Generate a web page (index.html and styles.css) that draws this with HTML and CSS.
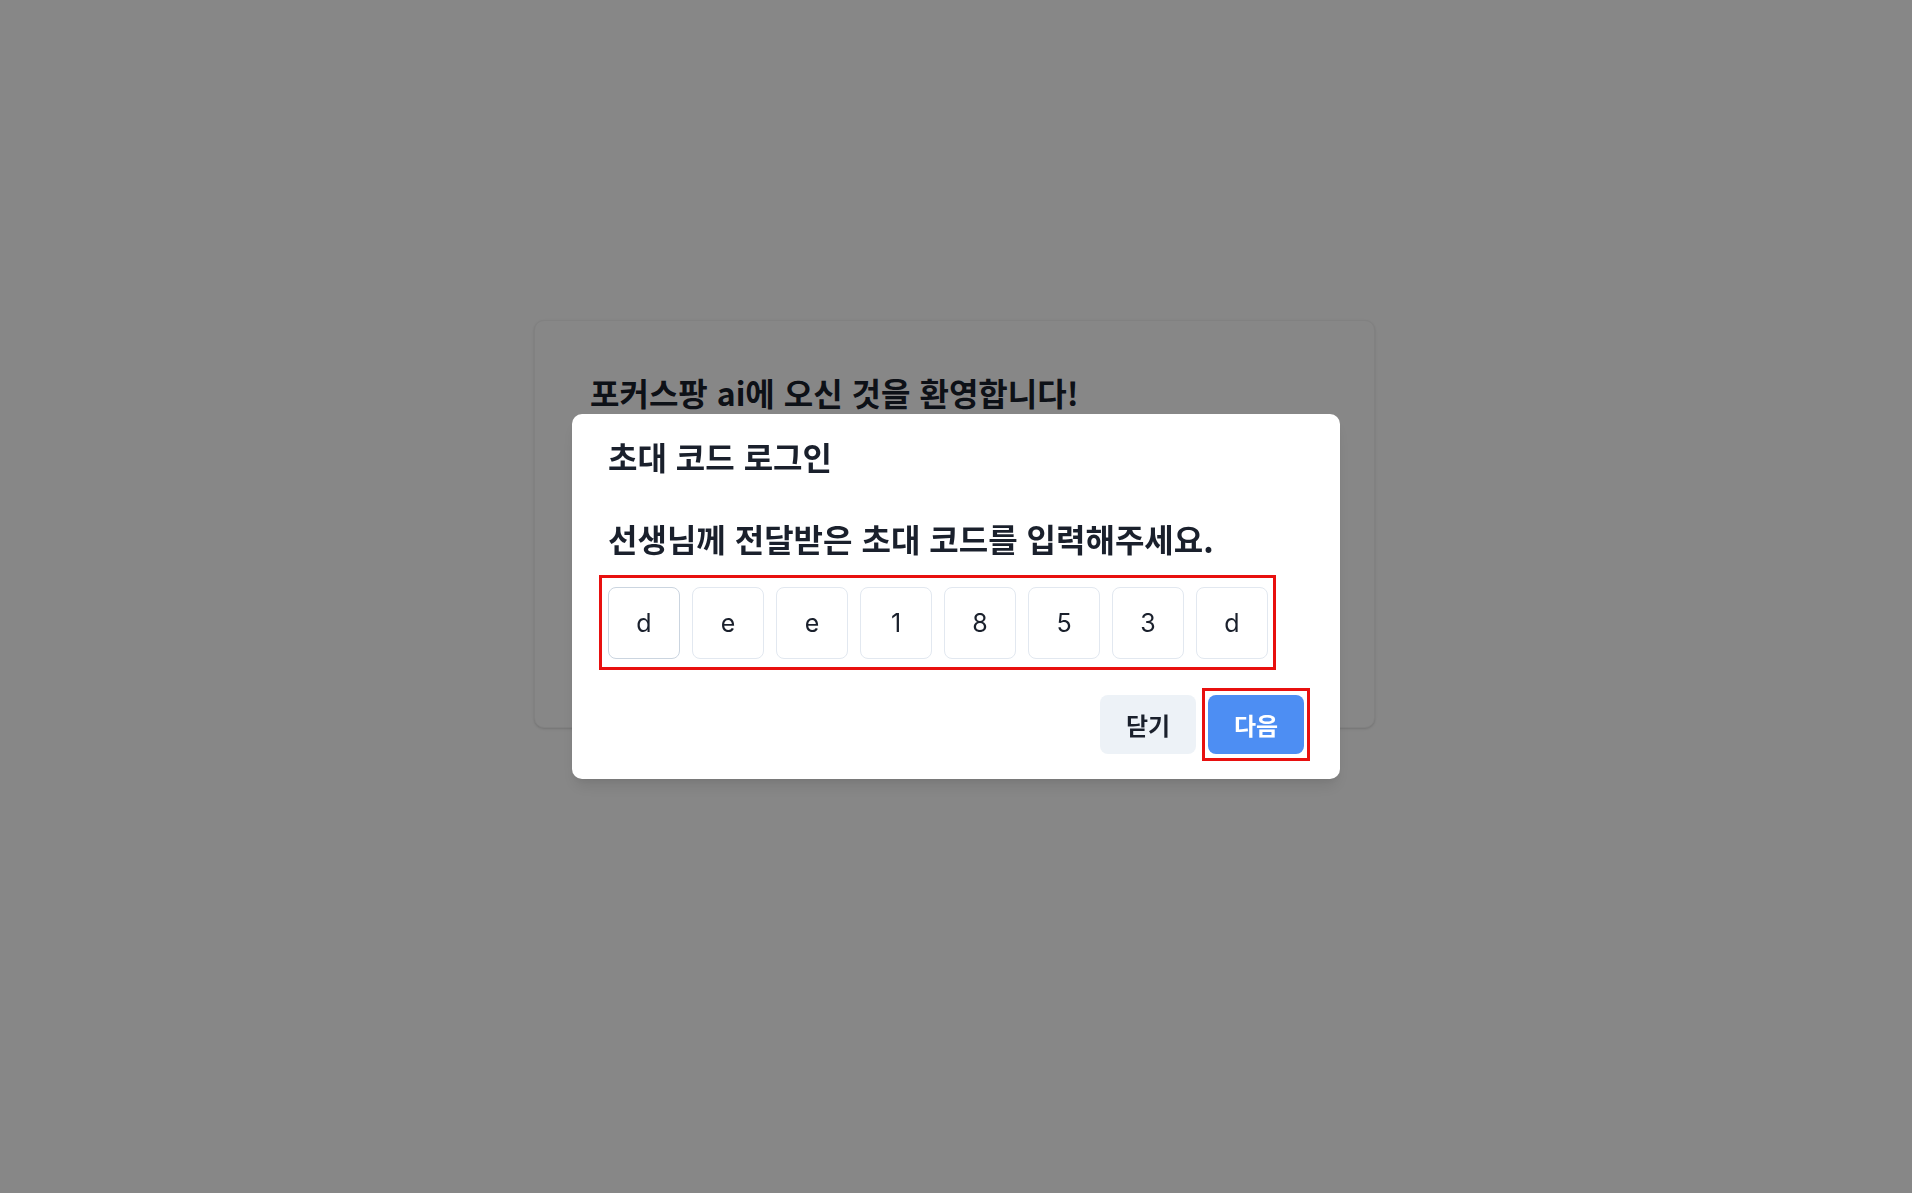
FILE: index.html
```html
<!DOCTYPE html>
<html lang="ko">
<head>
  <meta charset="UTF-8">
  <meta name="viewport" content="width=device-width, initial-scale=1.0">
  <title>포커스팡 ai</title>
  <link rel="stylesheet" href="styles.css">
</head>
<body>
  <div class="page">
    <div class="card">
      <h1 class="card-title">포커스팡 ai에 오신 것을 환영합니다!</h1>
    </div>
  </div>

  <!-- 초대 코드 모달 -->
  <div class="overlay">
    <div class="modal">
      <h2 class="modal-title">초대 코드 로그인</h2>
      <div class="modal-body">
        <p class="modal-desc">선생님께 전달받은 초대 코드를 입력해주세요.</p>
        <div class="code-mark">
          <div class="code-row">
            <input class="code-input active" type="text" maxlength="1" value="d">
            <input class="code-input" type="text" maxlength="1" value="e">
            <input class="code-input" type="text" maxlength="1" value="e">
            <input class="code-input" type="text" maxlength="1" value="1">
            <input class="code-input" type="text" maxlength="1" value="8">
            <input class="code-input" type="text" maxlength="1" value="5">
            <input class="code-input" type="text" maxlength="1" value="3">
            <input class="code-input" type="text" maxlength="1" value="d">
          </div>
        </div>
      </div>
      <div class="modal-footer">
        <button class="btn btn-close">닫기</button>
        <span class="btn-mark"><button class="btn btn-next">다음</button></span>
      </div>
    </div>
  </div>
</body>
</html>
```

FILE: styles.css
```css
* {
  margin: 0;
  padding: 0;
  box-sizing: border-box;
}
html, body {
  width: 100%;
  height: 100%;
}
body {
  background: #fff;
  color: #1a202c;
  font-family: "Noto Sans CJK KR", "Noto Sans", sans-serif;
}
.page {
  display: flex;
  justify-content: center;
  padding-top: 320px;
  padding-right: 3px;
}
.card {
  width: 841px;
  height: 408px;
  padding: 47px 55px;
  background: #fff;
  border: 1px solid #f3f3f3;
  border-radius: 10px;
  box-shadow: 0 1px 3px rgba(0, 0, 0, 0.1), 0 1px 2px rgba(0, 0, 0, 0.06);
}
.card-title {
  font-size: 32px;
  font-weight: 700;
  line-height: 48px;
}

/* 모달 */
.overlay {
  position: fixed;
  top: 0;
  left: 0;
  right: 0;
  bottom: 0;
  background: rgba(0, 0, 0, 0.47);
  display: flex;
  align-items: center;
  justify-content: center;
}
.modal {
  width: 768px;
  background: #fff;
  border-radius: 10px;
  padding: 18px 36px 25px;
  box-shadow: 0 10px 15px -3px rgba(0, 0, 0, 0.1), 0 4px 6px -2px rgba(0, 0, 0, 0.05);
}
.modal-title {
  font-size: 32px;
  font-weight: 700;
  line-height: 48px;
}
.modal-body {
  padding-top: 34px;
}
.modal-desc {
  font-size: 32px;
  font-weight: 700;
  line-height: 48px;
}
.code-mark {
  width: fit-content;
  margin: 13px 0 0 -9px;
  padding: 9px 5px 8px 6px;
  border: 3px solid #e8100f;
}
.code-row {
  display: flex;
  gap: 12px;
}
.code-input {
  width: 72px;
  height: 72px;
  border: 1px solid #e2e8f0;
  border-radius: 8px;
  background: #fff;
  text-align: center;
  font-family: Inter, "Noto Sans", sans-serif;
  font-size: 25px;
  color: #1a202c;
  outline: none;
}
.code-input.active {
  border-color: #cbd5e0;
}
.modal-footer {
  display: flex;
  justify-content: flex-end;
  align-items: center;
  gap: 12px;
  margin-top: 25px;
}
.btn {
  width: 96px;
  height: 59px;
  border: none;
  border-radius: 8px;
  font-family: "Noto Sans CJK KR", "Noto Sans", sans-serif;
  font-size: 24px;
  font-weight: 700;
  cursor: pointer;
}
.btn-close {
  background: #edf2f7;
  color: #1a202c;
}
.btn-mark {
  display: flex;
  margin: -7px -6px;
  padding: 4px 3px;
  border: 3px solid #e8100f;
}
.btn-next {
  background: #4d8ef3;
  color: #fff;
}
```
